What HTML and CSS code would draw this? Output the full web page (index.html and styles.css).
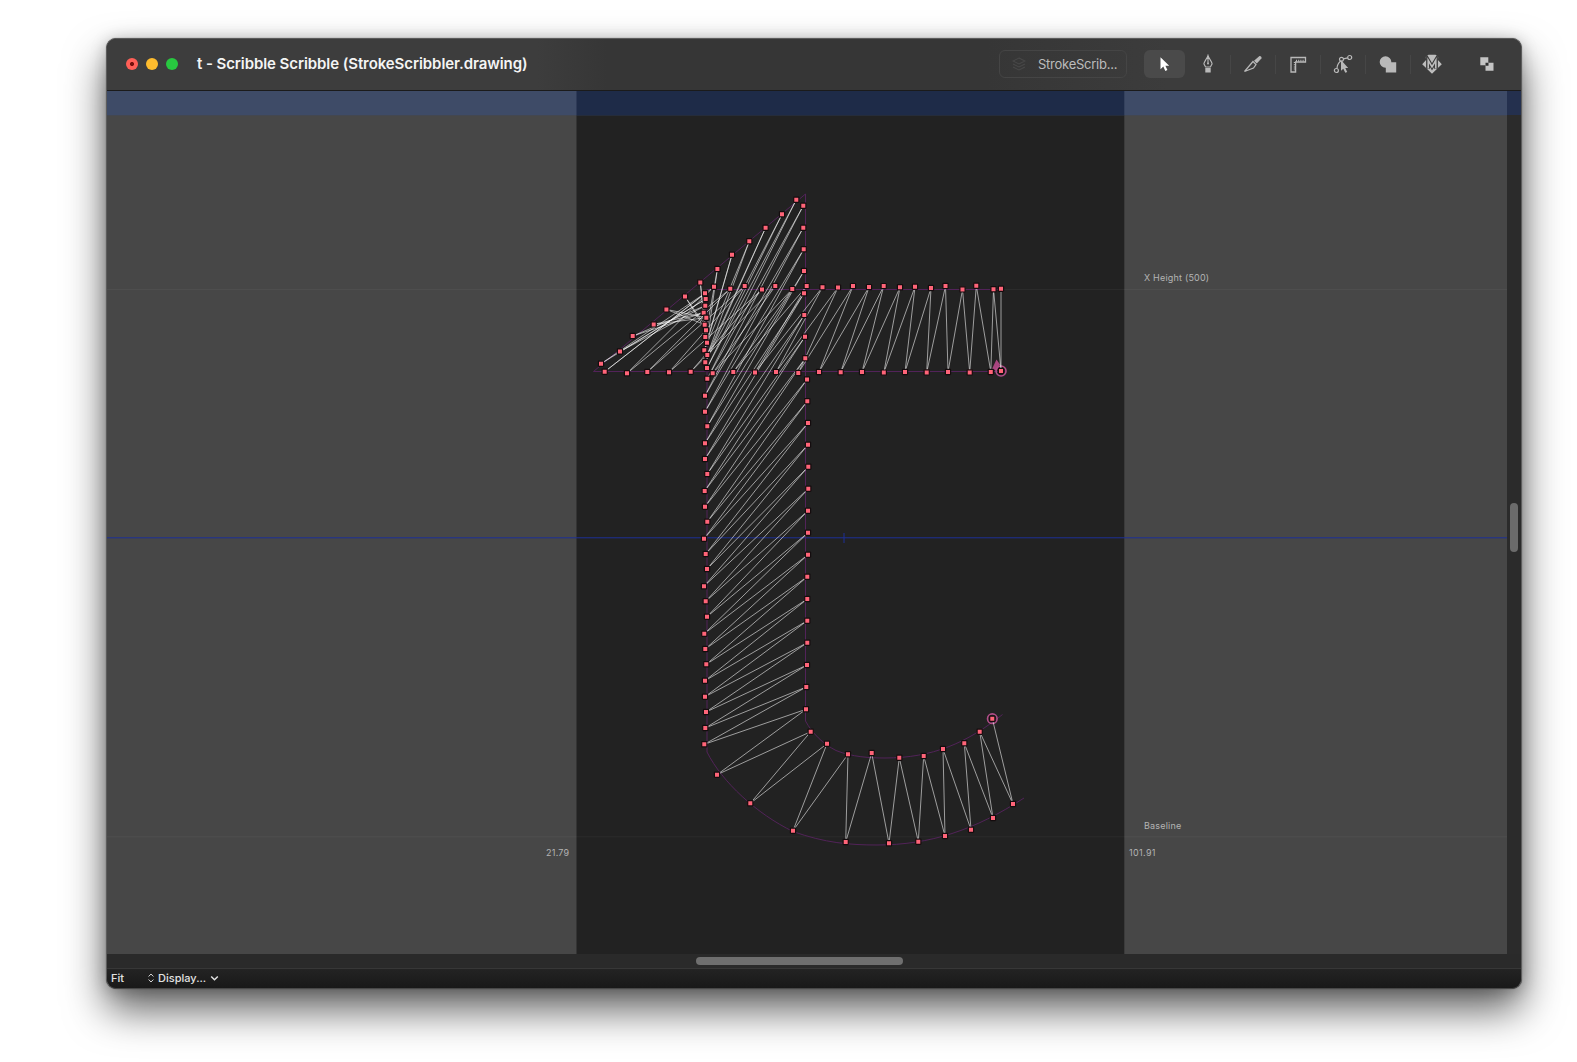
FILE: index.html
```html
<!DOCTYPE html>
<html lang="en">
<head>
<meta charset="utf-8">
<title>t - Scribble Scribble (StrokeScribbler.drawing)</title>
<link rel="stylesheet" href="styles.css">
</head>
<body>
<main class="window">
  <header class="titlebar">
    <div class="lights"><i class="light close"></i><i class="light minimise"></i><i class="light expand"></i></div>
    <h1 class="title">t - Scribble Scribble (StrokeScribbler.drawing)</h1>
    <div class="layer-field">
      <svg width="14" height="14" viewBox="0 0 14 14" fill="none" stroke="#484848" stroke-width="1.1"><path d="M7 1l6 3-6 3-6-3zM1 7l6 3 6-3M1 10l6 3 6-3"/></svg>
      <span>StrokeScrib...</span>
    </div>
    <nav class="tools">
      <span class="tool active"><svg width="20" height="20" viewBox="0 0 20 20"><path d="M5.500 3.200v12l2.800-2.600 2 4.300 2.100-1-2-4.200h3.800z" fill="#fff"/></svg></span>
      <span class="tool"><svg width="20" height="20" viewBox="0 0 20 20"><path d="M10 1.500c-.8 2.800-3.800 6-4.100 8.300L7.600 13h4.800l1.700-3.200C13.800 7.500 10.800 4.300 10 1.500zM10 3v6" fill="none" stroke="#b9b9b9" stroke-width="1.100"/><circle cx="10" cy="9.500" r="1" fill="#b9b9b9"/><path d="M7.300 14h5.400v4.500H7.300z" fill="#b9b9b9"/></svg></span>
      <span class="tool"><svg width="20" height="20" viewBox="0 0 20 20"><path d="M1.500 17.500L10 7.500l3 3-2.500 3.600z" fill="none" stroke="#b9b9b9" stroke-width="1.200"/><path d="M11 6.800l5.200-4.600c1-.7 3 .9 2.200 2.200l-4.600 5.200z" fill="#b9b9b9"/></svg></span>
      <span class="tool"><svg width="20" height="20" viewBox="0 0 20 20"><path d="M3 18V3.500h14.500V8H7.600v10z" fill="none" stroke="#b9b9b9" stroke-width="1.300"/><path d="M8 6.800h8M6.800 8v9" stroke="#b9b9b9" stroke-width="2" stroke-dasharray="1 1.200"/></svg></span>
      <span class="tool"><svg width="20" height="20" viewBox="0 0 20 20"><g fill="none" stroke="#b9b9b9" stroke-width="1.200"><circle cx="3.400" cy="16.500" r="2"/><circle cx="8.500" cy="5.300" r="2"/><circle cx="16.700" cy="3.500" r="2"/><path d="M4 14.500c0-3 2-6 3.700-7.500M10.500 4.900l4.200-1"/></g><path d="M8 6v10.800l2.300-2 2 4 1.900-.9-1.900-3.900h2.900z" fill="#b9b9b9"/></svg></span>
      <span class="tool"><svg width="20" height="20" viewBox="0 0 20 20" fill="#b9b9b9"><circle cx="7.500" cy="8" r="5.800"/><path d="M7.800 8.200h10.400v10.300H7.800z"/></svg></span>
      <span class="tool mask"><svg width="20" height="20" viewBox="0 0 20 20"><path d="M3.800 4.300C3.500 2 5 .8 7 .8h6c2 0 3.500 1.200 3.200 3.500L15.300 5.300l4.500 4.900-9.800 9.500L.2 10.200l4.500-4.900z" fill="#bdbdbd"/><path d="M6 14.800V6l4 6.800L14 6v8.800" fill="none" stroke="#3c3c3c" stroke-width="3.800"/><path d="M6.200 14.500V6.300l3.800 6.500 3.800-6.500v8.200" fill="none" stroke="#bdbdbd" stroke-width="1.600"/></svg></span>
      <span class="tool last"><svg width="20" height="20" viewBox="0 0 20 20"><path d="M3.300 3.300h8v8h-8zM8.500 8.700h8v8h-8z" fill="#c4c4c4"/><path d="M8.500 8.700h3v3h-3z" fill="#303030"/></svg></span>
    </nav>
  </header>
  <section class="editor">
    <svg class="canvas" viewBox="107 91 1400 863" width="1400" height="863">
      <rect class="desk" x="107" y="91" width="1400" height="863"/>
      <rect class="paper" x="576.500" y="91" width="547.800" height="863"/>
      <rect class="band" x="107" y="91" width="1400" height="24.300"/>
      <rect class="band-core" x="576.500" y="91" width="547.800" height="24.300"/>
      <path class="metric" d="M107 289.500H1507M107 836.800H1507"/>
      <path class="guide" d="M107 537.800H1507M844 533v10"/>
      <path class="outline" d="M1001 371.500H593.500L805.500 194V721C812 733 823 744 836 750.500C852 757 870 758 885 758C932 758 967 743 1002.500 714.500M1001 289.500H707V752C722 782 757 814 793 831.500C825 843 850 845 877 845C930 845 975 830 1024 798"/>
      <path class="start" d="M992 369l4.500-9.500 3.500 5-3 6z"/>
      <circle class="ring" cx="1001" cy="371" r="5"/>
      <circle class="ring" cx="992.300" cy="718.700" r="4.800"/>
      <g id="threads" class="threads"></g>
      <g id="nodes" class="nodes"></g>
      <g class="labels">
        <text x="1144" y="281.400">X Height (500)</text>
        <text x="1144" y="829.400">Baseline</text>
        <text x="569.300" y="856.300" text-anchor="end">21.79</text>
        <text class="wide" x="1129" y="856.300">101.91</text>
      </g>
    </svg>
    <div class="vscroll"><div class="vthumb"></div></div>
  </section>
  <div class="hscroll"><div class="hthumb"></div></div>
  <footer class="status">
    <span class="zoom">Fit</span>
    <svg width="8" height="12" viewBox="0 0 8 12" fill="none" stroke="#d5d5d5" stroke-width="1"><path d="M1.600 4.500L4 2l2.400 2.500M1.600 7.500L4 10l2.400-2.500"/></svg>
    <span class="display">Display...</span>
    <svg width="9" height="12" viewBox="0 0 9 12" fill="none" stroke="#e2e2e2" stroke-width="1.500"><path d="M1.200 4.500l3.300 3.200 3.300-3.200"/></svg>
  </footer>
</main>
<script src="scribble.js"></script>
</body>
</html>
```
FILE: styles.css
```css
* { box-sizing: border-box; }
body { margin: 0; padding: 38px 0 0 106px; height: 1062px; overflow: hidden; background: #fff; font-family: Inter, "Liberation Sans", sans-serif; }
.window { width: 1416px; height: 951px; display: flex; flex-direction: column; border: 1px solid #5c5c5c; border-bottom-color: #484848; border-radius: 10px; overflow: hidden; background: #2a2a2a; box-shadow: 0 0 1px rgba(0,0,0,.6), 0 21px 40px rgba(0,0,0,.62), 0 2px 16px rgba(0,0,0,.22); }
.titlebar { height: 52px; flex: none; display: flex; align-items: center; padding: 0 0 1px 19px; border-bottom: 1px solid #1b1b1b; background: linear-gradient(90deg, #3d3d3d 0, #3d3d3d 430px, #363636 500px, #363636 880px, #3c3c3c 1060px, #3c3c3c); }
.lights { display: flex; gap: 8px; }
.light { width: 12px; height: 12px; border-radius: 50%; }
.close { background: radial-gradient(circle, #760f0c 0 1.6px, #ff5f57 2.4px); }
.minimise { background: #febc2e; }
.expand { background: #28c840; }
.title { margin: 0 0 0 19px; width: 802px; font-size: 15px; font-weight: 600; line-height: 20px; color: #f4f4f4; white-space: nowrap; letter-spacing: -.08px; }
.layer-field { flex: none; width: 128px; height: 28px; display: flex; align-items: center; gap: 12px; padding-left: 12px; border: 1px solid #454545; border-radius: 6px; font-size: 13px; line-height: 16px; color: #bcbcbc; white-space: nowrap; }
.layer-field svg { flex: none; }
.layer-field span { margin-top: -1px; letter-spacing: -.25px; }
.tools { display: flex; margin-left: 17px; }
.tool { position: relative; flex: none; width: 45px; height: 28px; display: grid; place-items: center; }
.tool:first-child { width: 41px; background: #4a4a4a; border-radius: 6px; }
.tool + .tool:not(:nth-child(2)):not(.last)::before { content: ""; position: absolute; left: 0; top: 5px; width: 1px; height: 19px; background: #464646; }
.tool.mask { width: 43px; }
.tool.last { margin-left: 11px; }
.editor { display: flex; height: 863px; flex: none; }
.canvas { display: block; flex: none; }
.desk { fill: #474747; }
.paper { fill: #222; }
.band { fill: #3e4b67; }
.band-core { fill: #1e2b48; }
.metric { stroke: rgba(255,255,255,.045); }
.guide { stroke: #1d2f96; fill: none; stroke-width: 1; }
.outline { stroke: #522359; fill: none; }
.start { fill: #a8457f; }
.ring { fill: none; stroke: #b04d88; stroke-width: 1.6; }
.threads line { stroke: #fff; stroke-opacity: .65; stroke-width: .87; }
.nodes rect { fill: #ff6478; stroke: #140c0e; stroke-width: 1.2; }
.labels text { font-size: 9px; fill: #b4b4b4; letter-spacing: .2px; }
.labels .wide { letter-spacing: .35px; }
.vscroll { flex: 1; padding: 412px 0 0 3px; background: linear-gradient(#24304e 0 24px, #2b2b2b 24px); }
.vthumb { width: 8px; height: 49px; border-radius: 4px; background: #6b6b6b; }
.hscroll { flex: none; height: 14px; padding: 3px 0 0 589px; background: #2a2a2a; }
.hthumb { width: 207px; height: 8px; border-radius: 4px; background: #6f6f6f; }
.status { flex: 1; display: flex; align-items: center; padding: 0 0 2px 4px; border-top: 1px solid #373737; background: linear-gradient(#232323, #191919); color: #e2e2e2; font-size: 11px; font-weight: 500; line-height: 14px; }
.zoom { width: 36px; }
.display { margin: 0 4px 0 3px; }
```
FILE: scribble.js
```javascript
// Rails of the scribble, in canvas units.
const barTop = [[1001,288.7],[993.5,289.3],[976.3,285.7],[962.5,289.4],[945.5,286],[931,288],[915,286.7],[900,287.3],[883.7,286.1],[869,287.1],[853,286.1],[838,287.4],[822.5,287.2],[806.7,286.1],[792.3,289.1],[775.3,286],[762,289.6],[744.7,286],[730.3,288.7],[714,286.7]];
const barBottom = [[1001,371],[990.8,372],[969.7,372.4],[948,372],[926.7,372.4],[905,372],[883.8,372.6],[862,372],[840.7,372.3],[819,372],[798.3,373],[776,372],[755,372.4],[733.3,372],[712.7,373.2],[690.7,371.8],[669,372.3],[647.3,372],[627,373.3],[604.7,371.7]];
const left = [[705,293.3],[705.7,299],[705.3,305.7],[703.7,312.7],[706.3,317.7],[704.7,324.7],[706,330.3],[705.3,337],[707,342.7],[704.3,350.3],[707.3,355],[705.3,362.3],[707,368],[707.3,378.7],[705,395.7],[705,411.7],[707.3,426.3],[705,443.3],[705,459],[707.3,474],[704.7,491],[705,506.7],[707.3,521.7],[704,538.7],[705.7,554],[707,569],[704,586.3],[705.7,601.3],[707,616.7],[704.3,633.7],[705.3,649],[706.3,664.3],[705,680.7],[705,696.7],[706,712],[705.3,728],[704.3,744.3],[717,774.7],[750.3,803.3],[793,830.7],[845.7,842],[889,843.3],[918.3,841.7],[945,836],[971,829.7],[993,818],[1013,804]];
const right = [[601,363.7],[620,351.5],[632.7,336],[653.7,324.4],[666.4,309.4],[685,296.6],[700.3,282.4],[717.4,269],[732,254.7],[749.3,241.3],[765.6,227.8],[782,214.3],[796.3,199.7],[803.3,205.7],[803.3,227.7],[803.7,249.3],[804,271],[804,293.3],[804.3,315],[805,336.7],[805.3,358.3],[807,379.5],[807.3,401.3],[808,423],[808,444.7],[808.3,466.7],[808.3,488.7],[808,510.7],[808,532.7],[808,554.7],[807.3,576.7],[807.3,599],[807.3,620.7],[807.3,642.7],[807,665],[806.3,687],[806,709.3],[810.7,731.7],[827,743.7],[848,754.3],[871.7,753],[899.3,757.7],[923.7,756],[943,749],[964.3,743.3],[979.7,731.7],[992.3,718.7]];

const path = [];
barTop.forEach((p, i) => path.push(p, barBottom[i]));
left.forEach((p, i) => path.push(p, right[i]));

const add = (parent, tag, attrs) => {
  const el = document.createElementNS("http://www.w3.org/2000/svg", tag);
  for (const key in attrs) el.setAttribute(key, attrs[key]);
  parent.appendChild(el);
};
const threads = document.getElementById("threads");
const nodes = document.getElementById("nodes");
path.forEach(([x, y], i) => {
  if (i) add(threads, "line", { x1: path[i - 1][0], y1: path[i - 1][1], x2: x, y2: y });
  add(nodes, "rect", { x: x - 2.6, y: y - 2.6, width: 5.2, height: 5.2, rx: 0.5 });
});
```
